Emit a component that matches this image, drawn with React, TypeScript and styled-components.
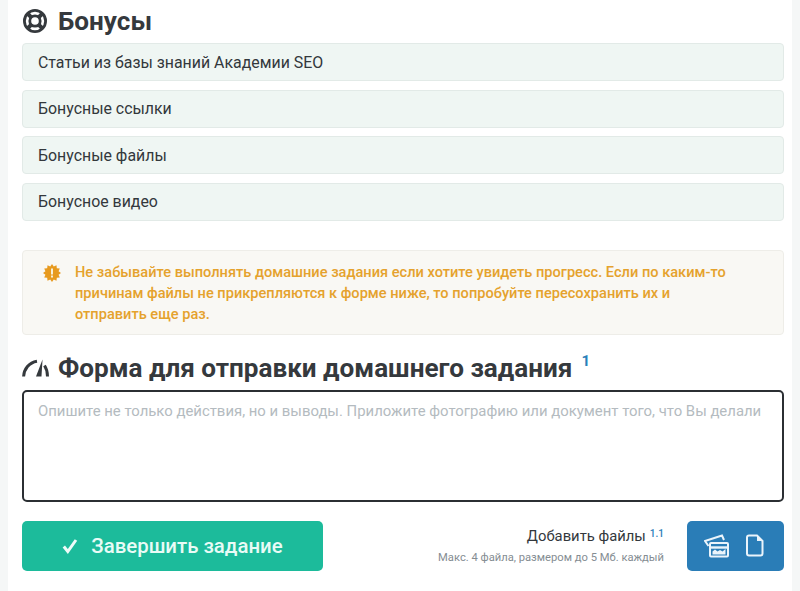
import styled, { createGlobalStyle } from "styled-components";

const GlobalStyle = createGlobalStyle`
  html, body {
    margin: 0;
    padding: 0;
    background: #f5f7f7;
  }
  body {
    font-family: Roboto, "Noto Sans", sans-serif;
  }
`;

const Page = styled.div`
  width: 784px;
  height: 591px;
  margin: 0 8px;
  padding: 0 8px 0 14px;
  box-sizing: border-box;
  background: #fff;
  overflow: hidden;
`;

const Heading = styled.h2<{ $top: number; $bottom: number; $gap: number }>`
  display: flex;
  align-items: center;
  gap: ${({ $gap }) => $gap}px;
  height: 32px;
  margin: ${({ $top }) => $top}px 0 ${({ $bottom }) => $bottom}px;
  font-size: 26.1px;
  line-height: 32px;
  font-weight: 700;
  color: #35393d;
  white-space: nowrap;
`;

const Note = styled.sup`
  align-self: flex-start;
  margin: 0;
  font-size: 15px;
  line-height: 18px;
  font-weight: 700;
  color: #2a80b9;
`;

const BonusList = styled.div`
  display: flex;
  flex-direction: column;
  gap: 8.67px;
`;

const BonusRow = styled.div`
  height: 38px;
  padding: 0 15px;
  box-sizing: border-box;
  display: flex;
  align-items: center;
  background: #eff6f3;
  border: 1px solid #e2eae7;
  border-radius: 4px;
  font-size: 15.9px;
  color: #33383c;
`;

const Alert = styled.div`
  display: flex;
  gap: 14px;
  height: 85px;
  margin-top: 29px;
  padding: 11px 20px 0;
  box-sizing: border-box;
  background: #f9f8f4;
  border: 1px solid #eeede8;
  border-radius: 4px;
  font-size: 14.6px;
  line-height: 21px;
  font-weight: 500;
  color: #e5a22d;
`;

const AlertIcon = styled.svg`
  flex: none;
  width: 18px;
  height: 18px;
  margin-top: 2px;
`;

const Message = styled.div`
  width: 670px;
`;

const TextArea = styled.div`
  height: 112px;
  padding: 9px 14px;
  box-sizing: border-box;
  border: 2px solid #2b2f33;
  border-radius: 5px;
  font-size: 14.9px;
  line-height: 20px;
  color: #b4bbc0;
  white-space: nowrap;
`;

const Footer = styled.div`
  display: flex;
  align-items: center;
  margin-top: 19px;
`;

const SubmitButton = styled.button`
  display: flex;
  align-items: center;
  justify-content: center;
  gap: 13px;
  width: 301px;
  height: 50px;
  padding: 0;
  border: none;
  border-radius: 5px;
  background: #1cbb9b;
  color: #e9fbf6;
  font-family: inherit;
  font-size: 20.4px;
  font-weight: 500;
`;

const Attach = styled.div`
  margin-left: auto;
  margin-right: 23px;
  text-align: right;
`;

const AttachTitle = styled.div`
  font-size: 14.8px;
  line-height: 20px;
  color: #33383c;
`;

const AttachNote = styled.sup`
  margin-left: 4px;
  font-size: 10px;
  line-height: 10px;
  font-weight: 500;
  color: #2a80b9;
  vertical-align: 4px;
`;

const AttachHint = styled.div`
  margin-top: 5px;
  font-size: 11.2px;
  line-height: 14px;
  color: #858d93;
`;

const FilesButton = styled.button`
  display: flex;
  align-items: center;
  justify-content: center;
  gap: 17px;
  width: 97px;
  height: 50px;
  padding: 0 3px 0 0;
  border: none;
  border-radius: 5px;
  background: #2a7db7;
`;

function LifeRing() {
  return (
    <svg width="26" height="26" viewBox="0 0 26 26" fill="none" stroke="#35393d">
      <circle cx="13" cy="13" r="10.6" strokeWidth="2.8" />
      <circle cx="13" cy="13" r="5.2" strokeWidth="2.8" />
      <path d="M6 6l3.6 3.6M20 6l-3.6 3.6M6 20l3.6-3.6M20 20l-3.6-3.6" strokeWidth="4" />
    </svg>
  );
}

function Gauge() {
  return (
    <svg width="27" height="18" viewBox="0 0 27 18" fill="none" stroke="#35393d">
      <path d="M1.6 17.5C2 10 7 3.5 15 2.2" strokeWidth="3" />
      <path d="M22.5 6.5C24.5 9.5 25.5 13.5 25.5 17.5" strokeWidth="3" />
      <path d="M20.5 0.5L14 17.5H19.5Z" fill="#35393d" stroke="none" />
    </svg>
  );
}

function Badge() {
  const points = Array.from({ length: 24 }, (_, i) => {
    const r = i % 2 ? 6.8 : 9;
    const a = (i * Math.PI) / 12;
    return `${9 + r * Math.cos(a)},${9 + r * Math.sin(a)}`;
  }).join(" ");
  return (
    <AlertIcon viewBox="0 0 18 18">
      <polygon points={points} fill="#e79a1f" />
      <rect x="8" y="4.5" width="2" height="6" fill="#f9f0d8" />
      <rect x="8" y="11.5" width="2" height="2" fill="#f9f0d8" />
    </AlertIcon>
  );
}

function Check() {
  return (
    <svg width="16" height="16" viewBox="0 0 16 16" fill="none" stroke="#eefbf8" strokeWidth="3">
      <path d="M1.8 8.5L5.8 13.5L14 2" />
    </svg>
  );
}

function Photos() {
  return (
    <svg width="25" height="24" viewBox="0 0 25 24" fill="none" stroke="#eaf4fb" strokeWidth="2">
      <rect x="6" y="9" width="18" height="13.5" rx="1" />
      <path d="M6 13.5H24" strokeWidth="2.4" />
      <path d="M8.5 20.5V17.5L11 15.5L13.5 17.5L16 16L18.5 17.5L21.5 15V20.5Z" fill="#eaf4fb" stroke="none" />
      <path d="M4.5 12L1 7L18 1.5L20 6" />
    </svg>
  );
}

function FileIcon() {
  return (
    <svg width="18" height="23" viewBox="0 0 18 23" fill="none" stroke="#eaf4fb" strokeWidth="2">
      <path d="M3 1.5H11L16.5 7V19.5Q16.5 21.5 14.5 21.5H3Q1 21.5 1 19.5V3.5Q1 1.5 3 1.5Z" />
      <path d="M11 1.5L16.5 7H11Z" fill="#eaf4fb" stroke="none" />
    </svg>
  );
}

const bonuses = [
  "Статьи из базы знаний Академии SEO",
  "Бонусные ссылки",
  "Бонусные файлы",
  "Бонусное видео",
];

export default function App() {
  return (
    <Page>
      <GlobalStyle />
      <Heading $top={5} $bottom={6} $gap={10}>
        <LifeRing />
        Бонусы
      </Heading>
      <BonusList>
        {bonuses.map((item) => (
          <BonusRow key={item}>{item}</BonusRow>
        ))}
      </BonusList>
      <Alert>
        <Badge />
        <Message>
          Не забывайте выполнять домашние задания если хотите увидеть прогресс. Если по каким-то
          причинам файлы не прикрепляются к форме ниже, то попробуйте пересохранить их и
          отправить еще раз.
        </Message>
      </Alert>
      <Heading $top={17} $bottom={6} $gap={9}>
        <Gauge />
        Форма для отправки домашнего задания
        <Note>1</Note>
      </Heading>
      <TextArea>Опишите не только действия, но и выводы. Приложите фотографию или документ того, что Вы делали</TextArea>
      <Footer>
        <SubmitButton>
          <Check />
          Завершить задание
        </SubmitButton>
        <Attach>
          <AttachTitle>
            Добавить файлы<AttachNote>1.1</AttachNote>
          </AttachTitle>
          <AttachHint>Макс. 4 файла, размером до 5 Мб. каждый</AttachHint>
        </Attach>
        <FilesButton>
          <Photos />
          <FileIcon />
        </FilesButton>
      </Footer>
    </Page>
  );
}
